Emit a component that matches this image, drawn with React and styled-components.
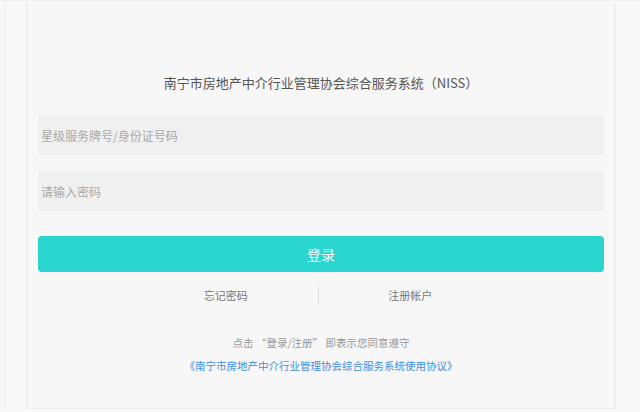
import React from "react";
import styled, { createGlobalStyle } from "styled-components";

const GlobalStyle = createGlobalStyle`
  html, body {
    margin: 0;
    padding: 0;
    background: #f7f7f7;
    font-family: "Noto Sans CJK SC", "Noto Sans", sans-serif;
  }
`;

const Page = styled.div`
  box-sizing: border-box;
  height: 412px;
  padding: 2px 24px 3px 5px;
  border-top: 1px solid #eeeeee;
  background: #f8f8f8;
`;

const Frame = styled.div`
  box-sizing: border-box;
  height: 100%;
  padding-left: 20px;
  border-left: 1px solid #efefef;
`;

const Card = styled.section`
  box-sizing: border-box;
  height: 100%;
  display: flex;
  flex-direction: column;
  padding: 70px 10px 0 10px;
  background: #f7f7f7;
  border-left: 2px solid #eeeeee;
  border-right: 2px solid #eeeeee;
  border-bottom: 1px solid #f0f0f0;
`;

const Title = styled.h1`
  margin: 0 0 22px;
  font-size: 13px;
  font-weight: 400;
  line-height: 20px;
  color: #555;
  text-align: center;
`;

const Field = styled.input`
  box-sizing: border-box;
  width: 100%;
  height: 40px;
  margin-bottom: ${(p) => p.$gap}px;
  padding: 0 3px;
  border: none;
  border-radius: 2px;
  outline: none;
  background: #f0f0f0;
  font-family: inherit;
  font-size: 12px;
  color: #333;

  &::placeholder {
    color: #a9a9a9;
  }
`;

const LoginButton = styled.button`
  height: 36px;
  width: 100%;
  border: none;
  border-radius: 4px;
  background: #29d5cf;
  color: #fff;
  font-family: inherit;
  font-size: 14px;
  cursor: pointer;
`;

const Links = styled.div`
  display: flex;
  align-items: center;
  width: 368px;
  margin: 14px auto 0;
  padding-right: 6px;
`;

const TextLink = styled.a`
  flex: 1;
  text-align: center;
  font-size: 11px;
  line-height: 18px;
  color: #777;
  text-decoration: none;
`;

const Divider = styled.span`
  width: 1px;
  height: 17px;
  background: #dddddd;
`;

const Notice = styled.p`
  margin: 27px 0 0;
  text-align: center;
  font-size: 10.5px;
  line-height: 23px;
  color: #999;
`;

const Agreement = styled.a`
  display: block;
  color: #3b8fe3;
  text-decoration: none;
`;

export default function App() {
  return (
    <>
      <GlobalStyle />
      <Page>
        <Frame>
          <Card>
            <Title>南宁市房地产中介行业管理协会综合服务系统（NISS）</Title>
            <Field $gap={16} placeholder="星级服务牌号/身份证号码" />
            <Field $gap={25} type="password" placeholder="请输入密码" />
            <LoginButton>登录</LoginButton>
            <Links>
              <TextLink href="#">忘记密码</TextLink>
              <Divider />
              <TextLink href="#">注册帐户</TextLink>
            </Links>
            <Notice>
              点击 “登录/注册” 即表示您同意遵守
              <Agreement href="#">
                《南宁市房地产中介行业管理协会综合服务系统使用协议》
              </Agreement>
            </Notice>
          </Card>
        </Frame>
      </Page>
    </>
  );
}
